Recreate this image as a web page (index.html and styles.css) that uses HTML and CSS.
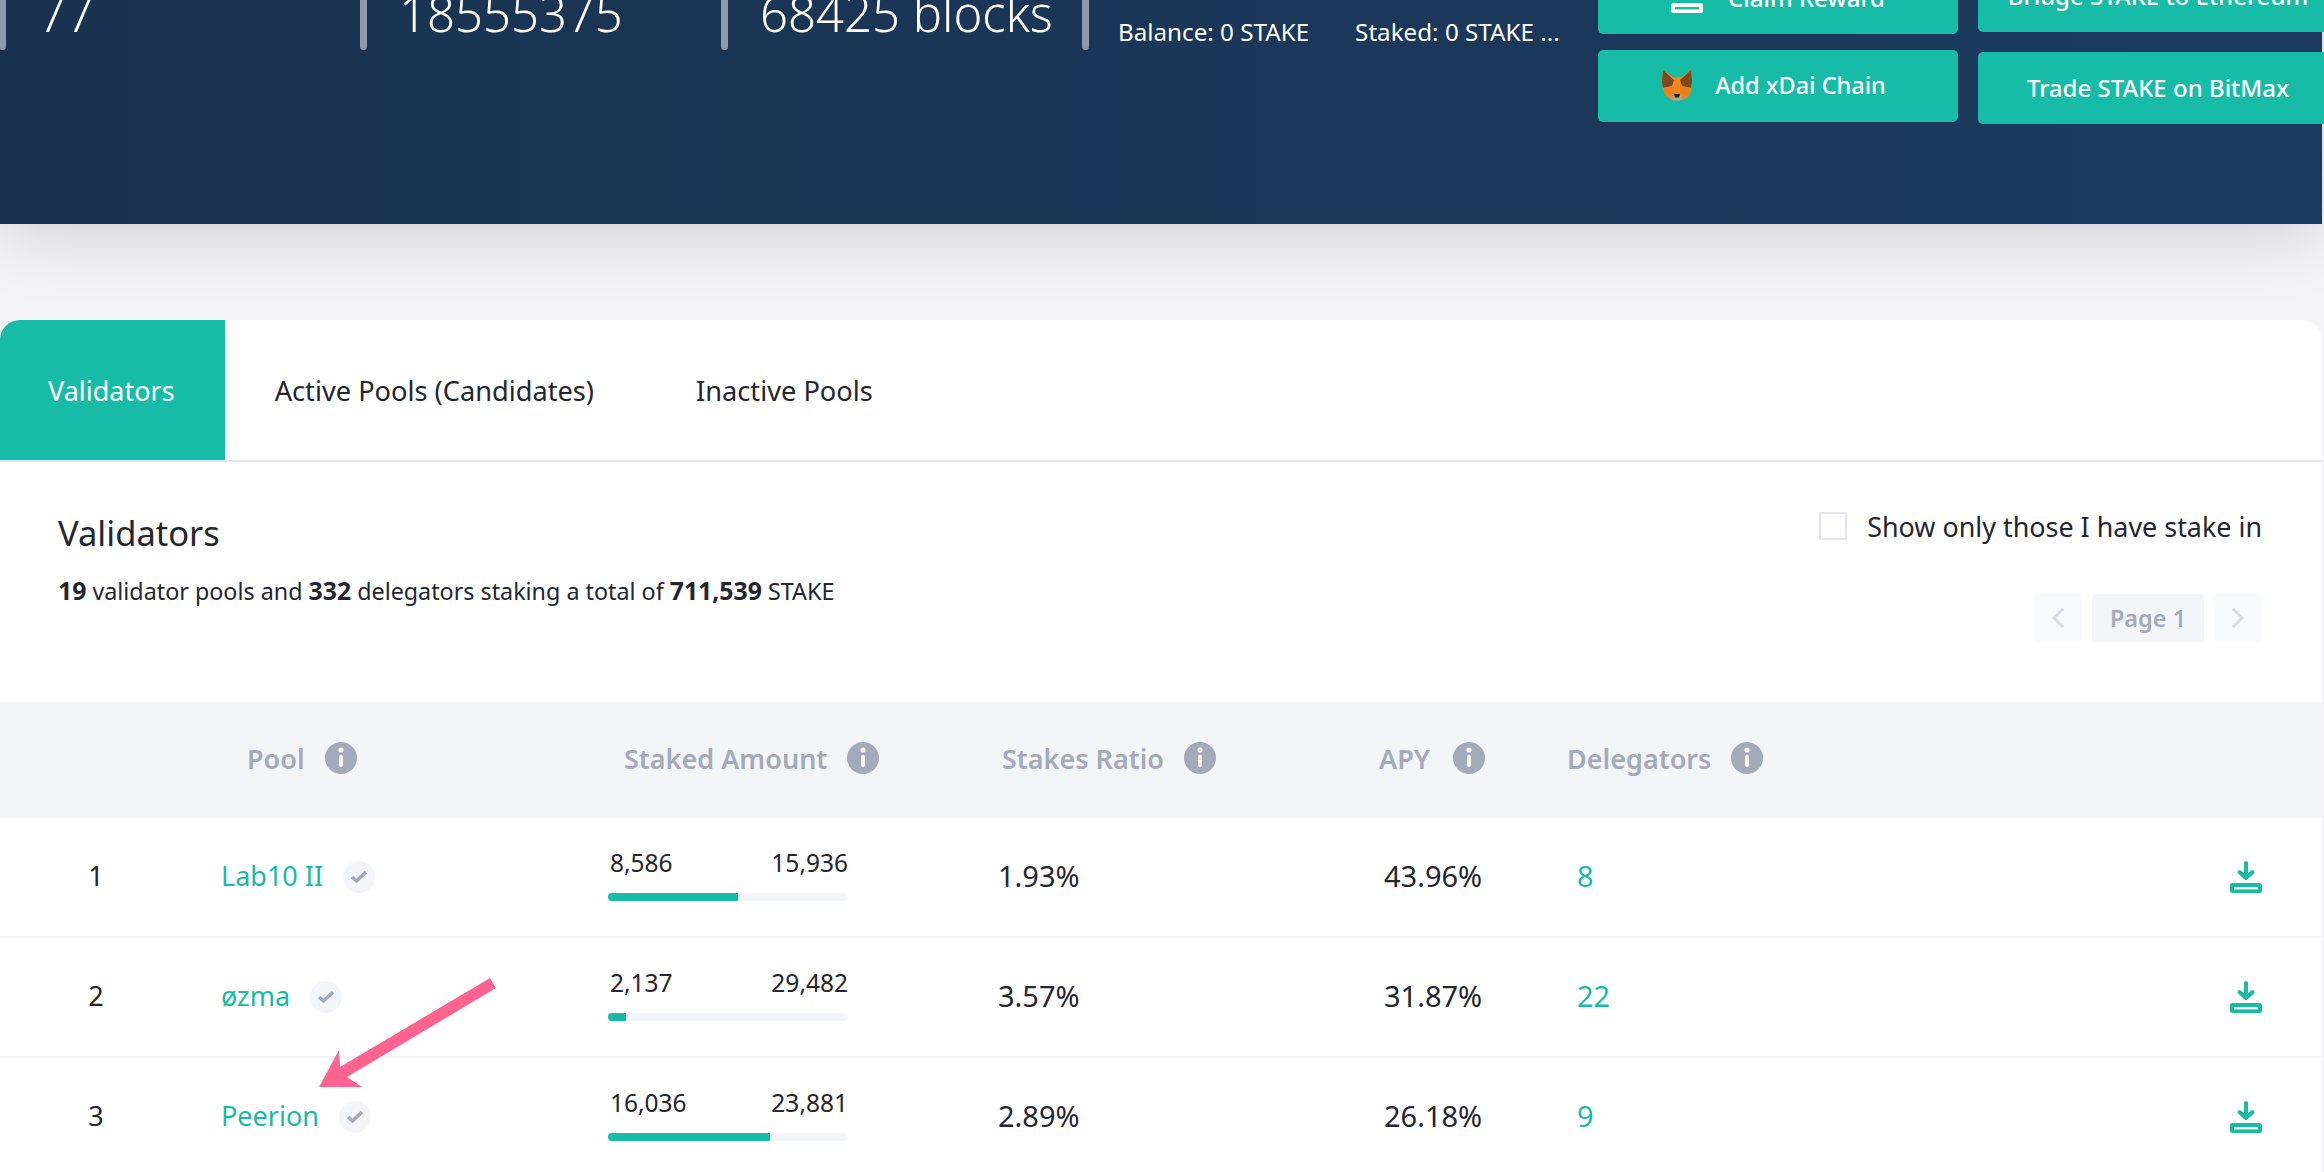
FILE: index.html
```html
<!DOCTYPE html>
<html lang="en">
<head>
  <meta charset="UTF-8">
  <title>Validators</title>
  <link rel="stylesheet" href="styles.css">
</head>
<body>
  <div class="page">
    <header class="top">
      <div class="stat"><span class="sep"></span><span class="stat-value">77</span></div>
      <div class="stat"><span class="sep"></span><span class="stat-value">18555375</span></div>
      <div class="stat"><span class="sep"></span><span class="stat-value">68425 blocks</span></div>
      <div class="stat stat-account">
        <span class="sep"></span>
        <div class="account">
          <span>Balance: 0 STAKE</span>
          <span>Staked: 0 STAKE ...</span>
        </div>
      </div>
      <div class="actions actions-left">
        <a class="btn">
          <svg class="icon" viewBox="0 0 32 32"><path d="M16 2v14M9.500 11l6.500 6 6.500-6" fill="none" stroke="#fff" stroke-width="4" stroke-linecap="round" stroke-linejoin="round"/><rect y="22" width="32" height="10" rx="2.500" fill="#fff"/><rect x="4" y="26" width="24" height="2.400" fill="#17bca6"/></svg>
          Claim Reward
        </a>
        <a class="btn btn-fox">
          <svg class="fox" viewBox="0 0 30 32">
            <path d="M1 1l10 7h8l10-7 1 14-2 11-7 5H10l-7-5-3-11z" fill="#f5841f"/>
            <path d="M1 1l11 10-2 6-9 2-1-6z" fill="#7c4a1c"/>
            <path d="M29 1L18 11l2 6 9 2 1-6z" fill="#7c4a1c"/>
            <path d="M1 19l9-2 3 7-7 3-3-1z M29 19l-9-2-3 7 7 3 3-1z" fill="#e8801d"/>
            <path d="M10 27h10l-2 4.500h-6z" fill="#b0a79c"/>
            <path d="M12 25h6l-1 3.500h-4z" fill="#1c1a18"/>
          </svg>
          Add xDai Chain
        </a>
      </div>
      <div class="actions actions-right">
        <a class="btn">Bridge STAKE to Ethereum</a>
        <a class="btn">Trade STAKE on BitMax</a>
      </div>
    </header>

    <main class="card">
      <nav class="tabs">
        <a class="tab tab-active">Validators</a>
        <a class="tab">Active Pools (Candidates)</a>
        <a class="tab">Inactive Pools</a>
      </nav>

      <section class="intro">
        <div>
          <h2 class="title">Validators</h2>
          <p class="summary"><b>19</b> validator pools and <b>332</b> delegators staking a total of <b>711,539</b> STAKE</p>
        </div>
        <div class="tools">
          <label class="only-mine"><span class="checkbox"></span>Show only those I have stake in</label>
          <div class="pager">
            <span class="pager-arrow"><svg viewBox="0 0 14 24"><path d="M12 3L3 12l9 9" fill="none" stroke="#d9dce4" stroke-width="3"/></svg></span>
            <span class="pager-page">Page 1</span>
            <span class="pager-arrow"><svg viewBox="0 0 14 24"><path d="M2 3l9 9-9 9" fill="none" stroke="#d9dce4" stroke-width="3"/></svg></span>
          </div>
        </div>
      </section>

      <div class="row row-head">
        <div></div>
        <div class="th th-pool">Pool <svg class="info" viewBox="0 0 32 32"><circle cx="16" cy="16" r="16" fill="#a5aaba"/><circle cx="16" cy="8" r="2.600" fill="#fff"/><rect x="14" y="13" width="4" height="12" rx="2" fill="#fff"/></svg></div>
        <div class="th th-staked">Staked Amount <svg class="info" viewBox="0 0 32 32"><circle cx="16" cy="16" r="16" fill="#a5aaba"/><circle cx="16" cy="8" r="2.600" fill="#fff"/><rect x="14" y="13" width="4" height="12" rx="2" fill="#fff"/></svg></div>
        <div class="th th-ratio">Stakes Ratio <svg class="info" viewBox="0 0 32 32"><circle cx="16" cy="16" r="16" fill="#a5aaba"/><circle cx="16" cy="8" r="2.600" fill="#fff"/><rect x="14" y="13" width="4" height="12" rx="2" fill="#fff"/></svg></div>
        <div class="th th-apy">APY <svg class="info" viewBox="0 0 32 32"><circle cx="16" cy="16" r="16" fill="#a5aaba"/><circle cx="16" cy="8" r="2.600" fill="#fff"/><rect x="14" y="13" width="4" height="12" rx="2" fill="#fff"/></svg></div>
        <div class="th">Delegators <svg class="info" viewBox="0 0 32 32"><circle cx="16" cy="16" r="16" fill="#a5aaba"/><circle cx="16" cy="8" r="2.600" fill="#fff"/><rect x="14" y="13" width="4" height="12" rx="2" fill="#fff"/></svg></div>
        <div></div>
      </div>

      <div class="row">
        <div class="num">1</div>
        <div class="pool"><a class="link">Lab10 II</a><span class="verified"><svg viewBox="0 0 32 32"><path d="M9 16l4.500 4L23 11" fill="none" stroke="#a5aaba" stroke-width="3.500"/></svg></span></div>
        <div class="staked">
          <div class="amounts"><span>8,586</span><span>15,936</span></div>
          <div class="bar"><div class="bar-fill" style="width:54%"></div></div>
        </div>
        <div class="val">1.93%</div>
        <div class="val apy">43.96%</div>
        <div class="val delegators"><a class="link">8</a></div>
        <div class="stake-btn"><svg class="icon" viewBox="0 0 32 32"><path d="M16 2v14M9.500 11l6.500 6 6.500-6" fill="none" stroke="#17bca6" stroke-width="4" stroke-linecap="round" stroke-linejoin="round"/><rect y="22" width="32" height="10" rx="2.500" fill="#17bca6"/><rect x="4" y="26" width="24" height="2.400" fill="#fff"/></svg></div>
      </div>

      <div class="row">
        <div class="num">2</div>
        <div class="pool"><a class="link">øzma</a><span class="verified"><svg viewBox="0 0 32 32"><path d="M9 16l4.500 4L23 11" fill="none" stroke="#a5aaba" stroke-width="3.500"/></svg></span></div>
        <div class="staked">
          <div class="amounts"><span>2,137</span><span>29,482</span></div>
          <div class="bar"><div class="bar-fill" style="width:7.600%"></div></div>
        </div>
        <div class="val">3.57%</div>
        <div class="val apy">31.87%</div>
        <div class="val delegators"><a class="link">22</a></div>
        <div class="stake-btn"><svg class="icon" viewBox="0 0 32 32"><path d="M16 2v14M9.500 11l6.500 6 6.500-6" fill="none" stroke="#17bca6" stroke-width="4" stroke-linecap="round" stroke-linejoin="round"/><rect y="22" width="32" height="10" rx="2.500" fill="#17bca6"/><rect x="4" y="26" width="24" height="2.400" fill="#fff"/></svg></div>
      </div>

      <div class="row">
        <div class="num">3</div>
        <div class="pool"><a class="link">Peerion</a><span class="verified"><svg viewBox="0 0 32 32"><path d="M9 16l4.500 4L23 11" fill="none" stroke="#a5aaba" stroke-width="3.500"/></svg></span></div>
        <div class="staked">
          <div class="amounts"><span>16,036</span><span>23,881</span></div>
          <div class="bar"><div class="bar-fill" style="width:67.600%"></div></div>
        </div>
        <div class="val">2.89%</div>
        <div class="val apy">26.18%</div>
        <div class="val delegators"><a class="link">9</a></div>
        <div class="stake-btn"><svg class="icon" viewBox="0 0 32 32"><path d="M16 2v14M9.500 11l6.500 6 6.500-6" fill="none" stroke="#17bca6" stroke-width="4" stroke-linecap="round" stroke-linejoin="round"/><rect y="22" width="32" height="10" rx="2.500" fill="#17bca6"/><rect x="4" y="26" width="24" height="2.400" fill="#fff"/></svg></div>
      </div>
    </main>
  </div>

  <!-- annotation drawn over the screenshot -->
  <svg class="arrow" viewBox="0 0 180 112"><polygon points="1,110 21,73 22,90 172,1 178,11 29,100 44,110" fill="#ff6392"/></svg>
</body>
</html>
```

FILE: styles.css
```css
html, body {
  margin: 0;
  height: 1172px;
  overflow: hidden;
}
body {
  font-family: "Noto Sans", "Open Sans", sans-serif;
  font-size: 27px;
  color: #23262f;
  background-color: #f3f3f8;
  position: relative;
}
.page {
  margin-top: -60px;
  width: 2322px;
}

/* top bar */
.top {
  display: flex;
  height: 284px;
  color: #fff;
  background: linear-gradient(90deg, #19324f, #1c3a60);
  box-shadow: 0 6px 70px rgba(0, 0, 0, 0.16);
  position: relative;
}
.stat {
  display: flex;
  align-items: flex-start;
  flex: none;
  width: 361px;
  height: 110px;
}
.stat:first-child {
  margin-left: -1px;
}
.sep {
  flex: none;
  width: 7px;
  height: 110px;
  border-radius: 4px;
  background-color: #8e9aab;
}
.stat-value {
  margin-left: 32px;
  padding-top: 45px;
  font-size: 49px;
  line-height: 56px;
  font-weight: 300;
  white-space: nowrap;
}
.stat-account {
  width: 516px;
}
.account {
  display: flex;
  gap: 46px;
  margin-left: 29px;
  padding-top: 77px;
  font-size: 24.200px;
  line-height: 30px;
  white-space: nowrap;
}
.actions {
  display: flex;
  flex-direction: column;
  flex: none;
  width: 360px;
}
.actions-left {
  gap: 16px;
  padding-top: 22px;
}
.actions-right {
  gap: 20px;
  padding-top: 20px;
  margin-left: 20px;
}
.btn {
  display: flex;
  align-items: center;
  justify-content: center;
  gap: 25px;
  height: 70px;
  padding-bottom: 2px;
  border-radius: 5px;
  background-color: #17bca6;
  font-size: 24px;
  font-weight: 500;
  white-space: nowrap;
}
.btn-fox {
  gap: 23px;
  padding-right: 8px;
  font-size: 23.500px;
}
.icon {
  display: block;
  width: 32px;
  height: 32px;
  flex: none;
}
.fox {
  display: block;
  width: 30px;
  height: 32px;
}

/* card */
.card {
  margin-top: 96px;
  background-color: #fff;
  border-radius: 20px 20px 0 0;
  overflow: hidden;
}
.tabs {
  display: flex;
  height: 140px;
  border-bottom: 2px solid #e2e6ec;
}
.tab {
  display: flex;
  align-items: center;
  padding: 0 50px;
  font-size: 27.200px;
}
.tab:first-child {
  padding: 0 50px 0 48px;
  font-size: 27px;
}
.tab:last-child {
  padding-left: 52px;
}
.tab-active {
  color: #fff;
  background-color: #17bca6;
}
.intro {
  display: flex;
  justify-content: space-between;
  height: 240px;
  padding: 0 60px 0 58px;
}
.title {
  margin: 49px 0 18px;
  font-size: 34.500px;
  line-height: 44px;
  font-weight: 400;
}
.summary {
  margin: 0;
  font-size: 23.300px;
  line-height: 34px;
}
.summary b {
  font-size: 24.800px;
}
.tools {
  display: flex;
  flex-direction: column;
  align-items: flex-end;
  padding-top: 50px;
}
.only-mine {
  display: flex;
  align-items: center;
  gap: 20px;
  height: 28px;
  font-size: 26.900px;
}
.checkbox {
  width: 24px;
  height: 24px;
  border: 2px solid #e2e5ee;
}
.pager {
  display: flex;
  gap: 10px;
  margin-top: 54px;
}
.pager-arrow {
  display: flex;
  align-items: center;
  justify-content: center;
  width: 48px;
  height: 48px;
  border-radius: 4px;
  background-color: #f9fafc;
}
.pager-arrow svg {
  width: 14px;
  height: 24px;
}
.pager-page {
  display: flex;
  align-items: center;
  justify-content: center;
  width: 112px;
  height: 48px;
  border-radius: 4px;
  background-color: #f4f5f9;
  color: #a5aaba;
  font-size: 23.500px;
  font-weight: 600;
}

/* table */
.row {
  display: grid;
  grid-template-columns: 223px 385px 390px 381px 188px 1fr 120px;
  align-items: center;
  height: 114px;
  padding-bottom: 4px;
  border-bottom: 2px solid #f3f3f8;
}
.row-head {
  height: 112px;
  border-bottom: 0;
  background-color: #f4f5f9;
  color: #a5aaba;
  font-weight: 600;
}
.th {
  display: flex;
  align-items: center;
  gap: 20px;
  white-space: nowrap;
}
.th-pool {
  padding-left: 24px;
}
.th-staked {
  padding-left: 16px;
}
.th-ratio {
  padding-left: 4px;
}
.th-apy {
  gap: 23px;
}
.info {
  width: 32px;
  height: 32px;
  flex: none;
}
.num {
  text-align: center;
  padding-right: 31px;
}
.pool {
  display: flex;
  align-items: center;
  gap: 19px;
  margin-left: -2px;
}
.link {
  color: #17bca6;
}
.verified {
  width: 32px;
  height: 32px;
  margin-top: 3px;
  margin-left: 1px;
  border-radius: 50%;
  background-color: #f4f5f9;
}
.verified svg {
  display: block;
}
.staked {
  width: 240px;
}
.amounts {
  display: flex;
  justify-content: space-between;
  font-size: 24.500px;
  line-height: 30px;
  padding-left: 2px;
  margin-bottom: 15px;
  margin-top: -1px;
}
.bar {
  height: 8px;
  border-radius: 4px;
  background-color: #f4f5f9;
  overflow: hidden;
}
.bar-fill {
  height: 100%;
  background-color: #17bca6;
}
.val {
  font-size: 29px;
}
.apy {
  padding-left: 5px;
}
.delegators {
  padding-left: 10px;
}
.stake-btn {
  display: flex;
  justify-content: flex-end;
  padding-right: 60px;
  padding-top: 4px;
}

/* pink arrow on top of the rows */
.arrow {
  position: absolute;
  left: 318px;
  top: 977px;
  width: 180px;
  height: 112px;
}
```
